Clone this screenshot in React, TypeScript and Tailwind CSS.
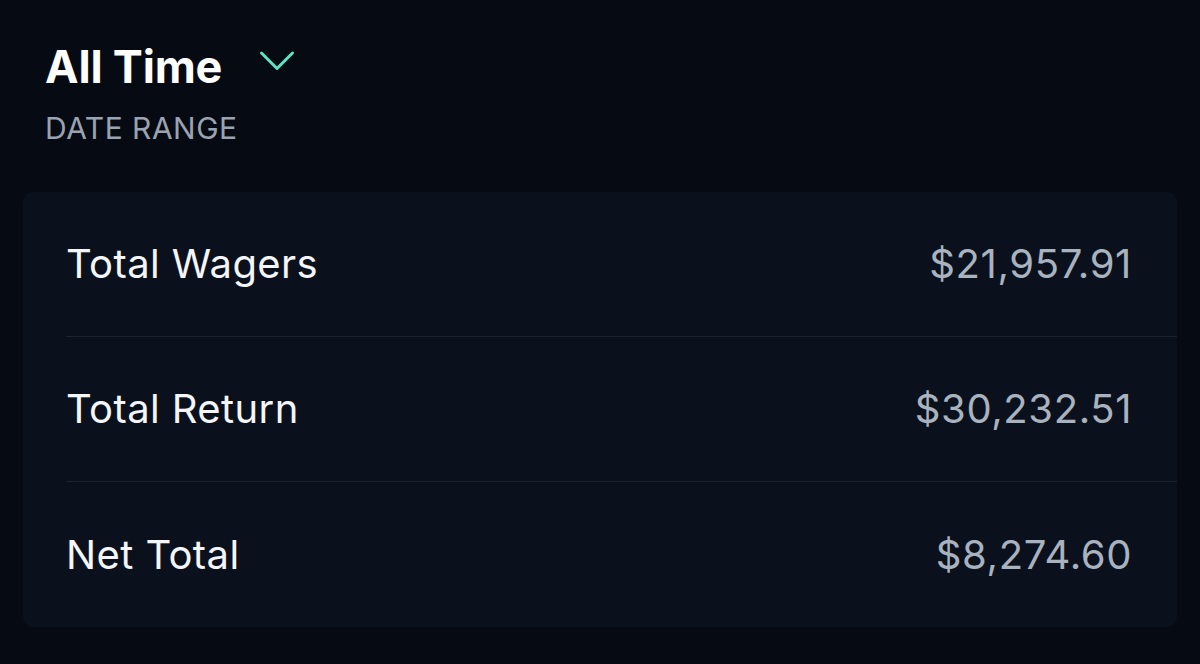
import React from "react";

const rows = [
  { label: "Total Wagers", value: "$21,957.91" },
  { label: "Total Return", value: "$30,232.51" },
  { label: "Net Total", value: "$8,274.60" },
];

export default function App() {
  return (
    <div
      className="w-[1200px] h-[664px] bg-[#060a13] overflow-hidden"
      style={{ fontFamily: "Inter, 'Noto Sans', sans-serif" }}
    >
      <div className="pl-[45px] pt-[40px]">
        <div className="flex items-center gap-[37px]">
          <span className="text-[45px] font-bold text-white leading-[54px] tracking-[-0.2px]">All Time</span>
          <svg width="36" height="22" viewBox="0 0 36 22" fill="none" className="mt-[-12px]">
            <path d="M2.5 3 L18 18.5 L33.5 3" stroke="#5fe3c3" strokeWidth="3" strokeLinecap="round" strokeLinejoin="round" />
          </svg>
        </div>
        <div className="mt-[16px] text-[30px] leading-[36px] text-[#9aa3b0] tracking-[0.5px]">DATE RANGE</div>
      </div>
      <div className="mt-[46px] mx-[23px] rounded-[10px] bg-[#0b111c] pl-[43px]">
        {rows.map((r, i) => (
          <div
            key={r.label}
            className={`flex items-center justify-between pr-[45px] h-[145px] ${i < rows.length - 1 ? "border-b border-[#1c2330]" : ""}`}
          >
            <span className="text-[40px] leading-[48px] text-[#f3f5f8] tracking-[0.4px]">{r.label}</span>
            <span className="text-[40px] leading-[48px] text-[#a9b2bf] tracking-[0.6px]">{r.value}</span>
          </div>
        ))}
      </div>
    </div>
  );
}
